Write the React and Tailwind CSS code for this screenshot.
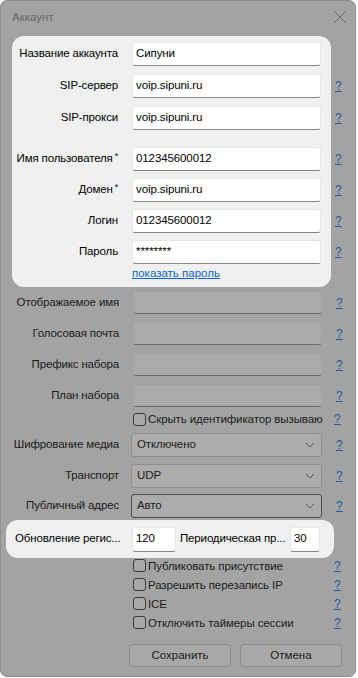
import React from "react";

const font = { fontFamily: '"Liberation Sans", Arial, sans-serif' };

function Q() {
  return (
    <span className="w-[20px] ml-[14px] text-[#1f5aa0] underline text-[12px] leading-none">?</span>
  );
}

function Label({ w, children, dim }) {
  return (
    <div
      className={`shrink-0 text-right whitespace-nowrap text-[11.5px] tracking-[-0.15px] leading-none ${dim ? "text-[#1c1c1c]" : "text-black"}`}
      style={{ width: w }}
    >
      {children}
    </div>
  );
}

function Star() {
  return <span className="text-[9px] align-top ml-[2px] -mr-[5px] relative -top-[1px]">*</span>;
}

function WhiteInput({ children, w = "w-[189px]", h = "h-[24px]" }) {
  return (
    <div
      className={`${w} ${h} shrink-0 bg-white rounded-[3px] border border-[#e6e6e6] border-b-[#878787] pl-[3px] flex items-center text-[11.5px] tracking-[-0.1px] text-black`}
    >
      {children}
    </div>
  );
}

function PanelRow({ label, value, star, mt }) {
  return (
    <div className={`flex items-center w-[340px] ${mt}`}>
      <Label w={star ? "101px" : "106px"}>
        {label}
        {star && <Star />}
      </Label>
      <div className={star ? "w-[19px] shrink-0" : "w-[14px] shrink-0"} />
      <WhiteInput>{value}</WhiteInput>
      {label !== "Название аккаунта" && <Q />}
    </div>
  );
}

function GreyRow({ label, mt }) {
  return (
    <div className={`flex items-center ${mt}`}>
      <Label w="118px" dim>
        {label}
      </Label>
      <div className="w-[14px] shrink-0" />
      <div className="w-[189px] h-[23px] shrink-0 bg-[#aaaaaa] rounded-[3px] border border-[#a2a2a2] border-b-[#6c6c6c]" />
      <Q />
    </div>
  );
}

function Chevron() {
  return (
    <svg width="10" height="6" viewBox="0 0 10 6" className="mr-[6px]">
      <path d="M1 1 L5 5 L9 1" fill="none" stroke="#555" strokeWidth="1" />
    </svg>
  );
}

function SelectRow({ label, value, mt, dark }) {
  return (
    <div className={`flex items-center ${mt}`}>
      <Label w="118px" dim>
        {label}
      </Label>
      <div className="w-[12px] shrink-0" />
      <div
        className={`w-[191px] h-[24px] shrink-0 bg-[#acacac] rounded-[3px] border ${dark ? "border-[#4e4e4e]" : "border-[#8e8e8e]"} flex items-center justify-between pl-[5px] text-[11.5px] tracking-[-0.1px] text-[#1c1c1c]`}
      >
        <span>{value}</span>
        <Chevron />
      </div>
      <Q />
    </div>
  );
}

function Checkbox() {
  return <div className="w-[13px] h-[13px] rounded-[3px] border border-[#3c3c3c] bg-[#a8a8a8] shrink-0" />;
}

function CheckRow({ label, h = "h-[19px]", mt = "" }) {
  return (
    <div className={`flex items-center ${h} ${mt}`}>
      <div className="w-[132px] shrink-0" />
      <Checkbox />
      <span className="ml-[2px] text-[11.5px] tracking-[-0.1px] text-[#1c1c1c] w-[174px] shrink-0 whitespace-nowrap leading-[14px]">
        {label}
      </span>
      <span className="ml-[12px] text-[#1f5aa0] underline text-[12px] leading-none">?</span>
    </div>
  );
}

export default function App() {
  return (
    <div className="w-[358px] h-[678px] bg-white" style={font}>
      <div className="w-[356px] h-[677px] rounded-[7px] border border-[#8e8e8e] bg-[#a3a3a3] flex flex-col overflow-hidden">
        {/* title bar */}
        <div className="h-[35px] shrink-0 flex items-center justify-between pl-[11px] pr-[9px]">
          <span className="text-[11.5px] text-[#676767] -mt-[1px]">Аккаунт</span>
          <svg width="12" height="12" viewBox="0 0 12 12" className="-mt-[3px]">
            <path d="M0.5 0.5 L11.5 11.5 M11.5 0.5 L0.5 11.5" stroke="#6a6a6a" strokeWidth="1" />
          </svg>
        </div>

        {/* highlighted panel 1 */}
        <div className="ml-[11px] w-[319px] h-[251px] shrink-0 bg-[#f0f0f0] rounded-[12px] pt-[6px]">
          <PanelRow label="Название аккаунта" value="Сипуни" mt="" />
          <PanelRow label="SIP-сервер" value="voip.sipuni.ru" mt="mt-[8px]" />
          <PanelRow label="SIP-прокси" value="voip.sipuni.ru" mt="mt-[8px]" />
          <PanelRow label="Имя пользователя" value="012345600012" star mt="mt-[17px]" />
          <PanelRow label="Домен" value="voip.sipuni.ru" star mt="mt-[7px]" />
          <PanelRow label="Логин" value="012345600012" mt="mt-[7px]" />
          <PanelRow label="Пароль" value="********" mt="mt-[7px]" />
          <div className="mt-[2px] pl-[120px] text-[11.5px] leading-[14px] text-[#0a64c8] underline">
            показать пароль
          </div>
        </div>

        <GreyRow label="Отображаемое имя" mt="mt-[4px]" />
        <GreyRow label="Голосовая почта" mt="mt-[8px]" />
        <GreyRow label="Префикс набора" mt="mt-[8px]" />
        <GreyRow label="План набора" mt="mt-[8px]" />
        <CheckRow label="Скрыть идентификатор вызываю" h="h-[16px]" mt="mt-[4px]" />
        <SelectRow label="Шифрование медиа" value="Отключено" mt="mt-[6px]" />
        <SelectRow label="Транспорт" value="UDP" mt="mt-[7px]" />
        <SelectRow label="Публичный адрес" value="Авто" mt="mt-[6px]" dark />

        {/* highlighted panel 2 */}
        <div className="mt-[2px] ml-[5px] w-[328px] h-[38px] shrink-0 bg-[#f0f0f0] rounded-[12px] flex items-center">
          <span className="pl-[9px] w-[126px] shrink-0 text-[11.5px] tracking-[-0.15px] text-black whitespace-nowrap">Обновление регис...</span>
          <WhiteInput w="w-[44px]" h="h-[25px]">120</WhiteInput>
          <span className="ml-[4px] w-[110px] shrink-0 text-[11.5px] tracking-[-0.15px] text-black whitespace-nowrap">Периодическая пр...</span>
          <WhiteInput w="w-[30px]" h="h-[25px]">30</WhiteInput>
        </div>

        <div className="-mt-[2px]">
          <CheckRow label="Публиковать присутствие" />
          <CheckRow label="Разрешить перезапись IP" />
          <CheckRow label="ICE" />
          <CheckRow label="Отключить таймеры сессии" />
        </div>

        <div className="mt-[12px] flex pl-[128px] gap-[9px]">
          <button className="w-[102px] h-[23px] rounded-[4px] border border-[#8c8c8c] bg-[#a8a8a8] text-[11.5px] text-[#1c1c1c]">
            Сохранить
          </button>
          <button className="w-[102px] h-[23px] rounded-[4px] border border-[#8c8c8c] bg-[#a8a8a8] text-[11.5px] text-[#1c1c1c]">
            Отмена
          </button>
        </div>
      </div>
    </div>
  );
}
